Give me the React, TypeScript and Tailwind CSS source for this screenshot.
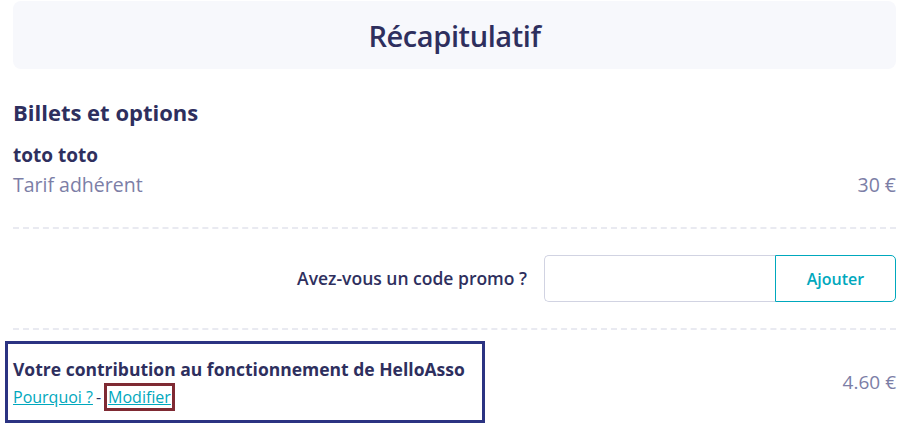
const font = { fontFamily: '"Open Sans", "Liberation Sans", sans-serif' };

export default function App() {
  return (
    <div className="min-h-[425px] w-[922px] bg-white text-[#2e2f5e]" style={font}>
      <div className="pl-[13px] pr-[26px] pt-px">
        <div className="flex h-[68px] items-center justify-center rounded-lg bg-[#f7f8fc]">
          <h1 className="text-[29px] font-semibold leading-none tracking-[-0.4px]">Récapitulatif</h1>
        </div>

        <h2 className="mt-[29px] text-[22px] font-bold leading-[28px]">Billets et options</h2>

        <div className="mt-[15px] flex items-end justify-between">
          <div>
            <div className="text-[19px] font-bold leading-[29px]">toto toto</div>
            <div className="text-[19.5px] leading-[30px] text-[#7c7ea6]">Tarif adhérent</div>
          </div>
          <div className="text-[19.5px] leading-[30px] text-[#7c7ea6]">30 €</div>
        </div>

        <div className="mt-[27px] border-t-2 border-dashed border-[#e9eaf1]" />

        <div className="flex h-[99px] items-center justify-end">
          <label className="mr-[17px] text-[17.5px] font-semibold">Avez-vous un code promo ?</label>
          <div className="flex h-[47px] w-[352px]">
            <input className="h-full flex-1 rounded-l-[5px] border border-r-0 border-[#d1d3e2] px-3 outline-none" />
            <button className="h-full w-[121px] rounded-r-[5px] border border-[#00a8bd] text-[16px] font-semibold text-[#00a8bd]">
              Ajouter
            </button>
          </div>
        </div>

        <div className="border-t-2 border-dashed border-[#e9eaf1]" />
      </div>

      <div className="mt-[11px] flex items-center justify-between pr-[26px]">
        <div className="ml-[5px] w-[480px] border-[3px] border-[#2b3382] pb-[9px] pl-[5px] pt-[12px]">
          <div className="text-[17.5px] font-bold leading-[27px]">Votre contribution au fonctionnement de HelloAsso</div>
          <div className="flex items-center text-[16px] font-medium leading-[22px] text-[#00a8bd]">
            <a className="underline">Pourquoi ?</a>
            <span className="mx-[3px] text-[#2e2f5e]">-</span>
            <a className="border-[3px] border-[#7f2a33] px-[1px] underline">Modifier</a>
          </div>
        </div>
        <div className="text-[19px] text-[#7c7ea6]">4.60 €</div>
      </div>
    </div>
  );
}
